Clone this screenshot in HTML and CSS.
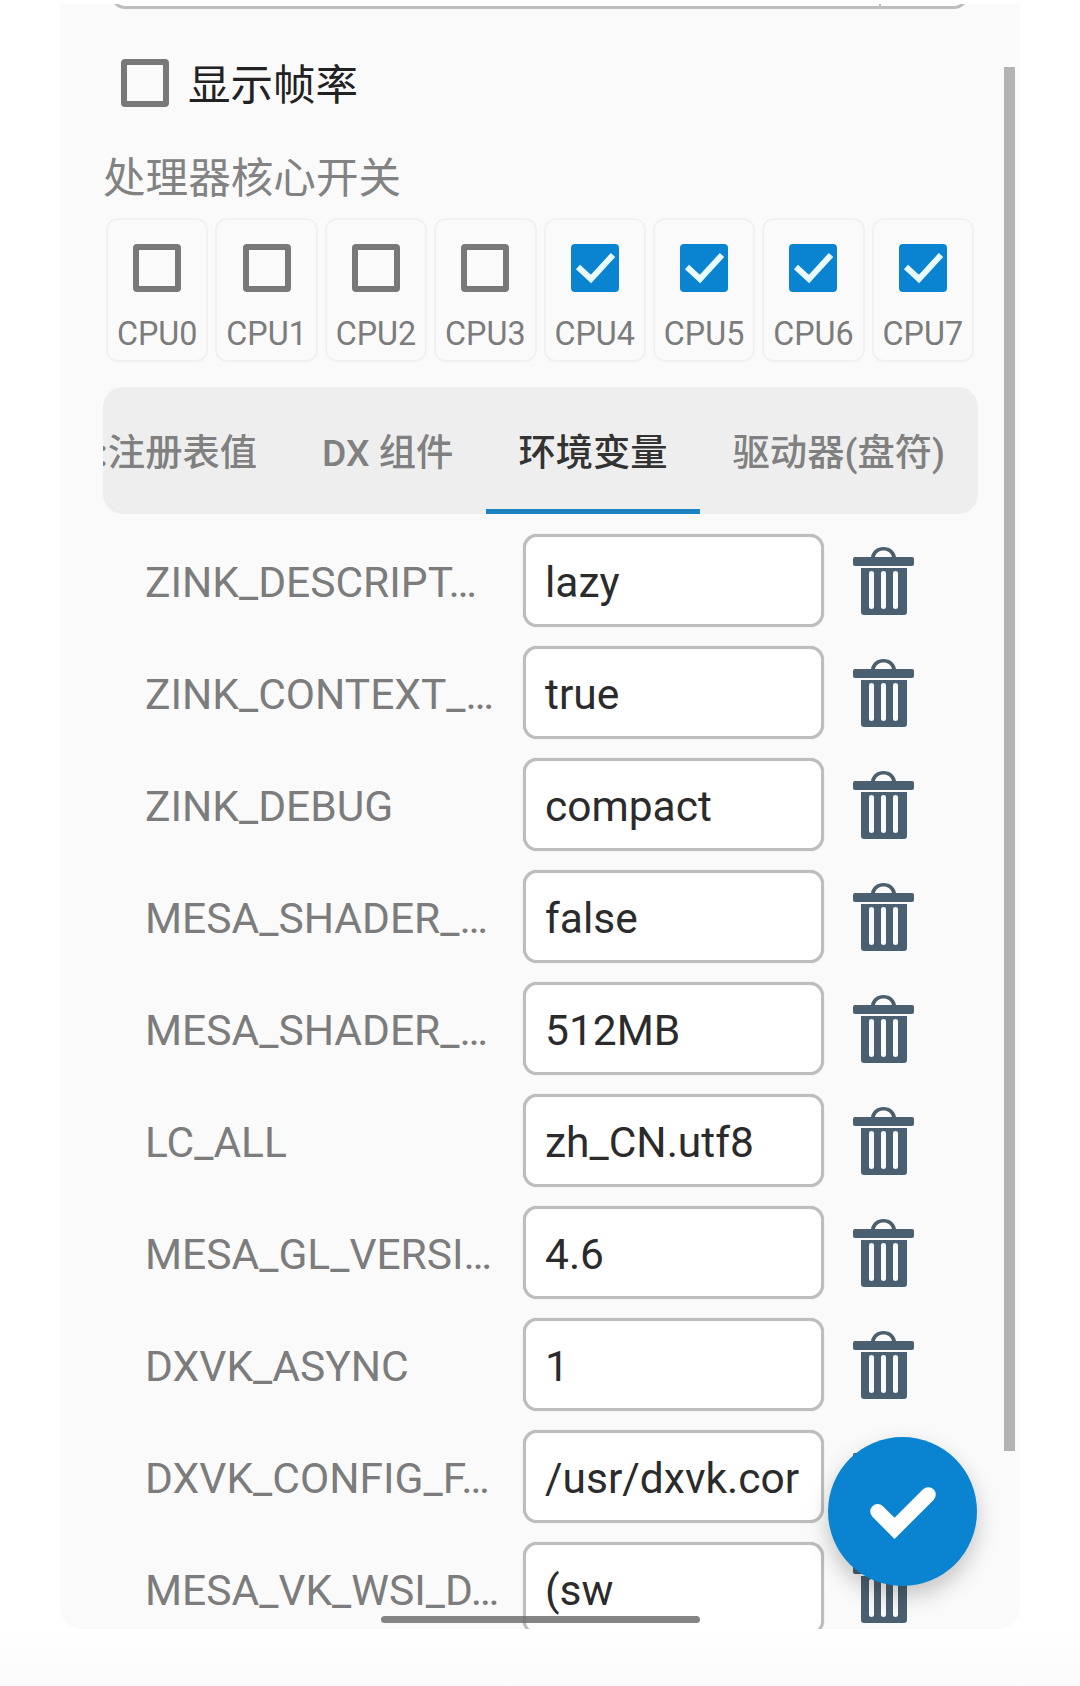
FILE: index.html
```html
<!DOCTYPE html>
<html lang="zh-CN">
<head>
<meta charset="utf-8">
<title>容器设置</title>
<link rel="stylesheet" href="styles.css">
</head>
<body>
<main class="panel">
  <div class="top-field"><span class="top-field-tick"></span></div>

  <label class="frame-row">
    <span class="box"></span>
    <span class="frame-text">显示帧率</span>
  </label>

  <h2 class="section-label">处理器核心开关</h2>

  <div class="cpu-grid">
    <div class="cpu-card"><span class="box"></span><span class="cpu-name">CPU0</span></div>
    <div class="cpu-card"><span class="box"></span><span class="cpu-name">CPU1</span></div>
    <div class="cpu-card"><span class="box"></span><span class="cpu-name">CPU2</span></div>
    <div class="cpu-card"><span class="box"></span><span class="cpu-name">CPU3</span></div>
    <div class="cpu-card"><span class="box box-on"><svg viewBox="0 0 48 48" class="tick"><path d="M7 23 20 35 42 11"/></svg></span><span class="cpu-name">CPU4</span></div>
    <div class="cpu-card"><span class="box box-on"><svg viewBox="0 0 48 48" class="tick"><path d="M7 23 20 35 42 11"/></svg></span><span class="cpu-name">CPU5</span></div>
    <div class="cpu-card"><span class="box box-on"><svg viewBox="0 0 48 48" class="tick"><path d="M7 23 20 35 42 11"/></svg></span><span class="cpu-name">CPU6</span></div>
    <div class="cpu-card"><span class="box box-on"><svg viewBox="0 0 48 48" class="tick"><path d="M7 23 20 35 42 11"/></svg></span><span class="cpu-name">CPU7</span></div>
  </div>

  <nav class="tabs">
    <div class="tab-strip">
      <span class="tab tab-first">:注册表值</span>
      <span class="tab">DX 组件</span>
      <span class="tab tab-active">环境变量</span>
      <span class="tab">驱动器(盘符)</span>
    </div>
  </nav>

  <div class="rows">
    <div class="row"><span class="key">ZINK_DESCRIPT…</span><div class="field"><span class="field-text">lazy</span></div><svg class="trash" viewBox="0 0 61 68"><use href="#trash-icon"/></svg></div>
    <div class="row"><span class="key">ZINK_CONTEXT_…</span><div class="field"><span class="field-text">true</span></div><svg class="trash" viewBox="0 0 61 68"><use href="#trash-icon"/></svg></div>
    <div class="row"><span class="key">ZINK_DEBUG</span><div class="field"><span class="field-text">compact</span></div><svg class="trash" viewBox="0 0 61 68"><use href="#trash-icon"/></svg></div>
    <div class="row"><span class="key">MESA_SHADER_…</span><div class="field"><span class="field-text">false</span></div><svg class="trash" viewBox="0 0 61 68"><use href="#trash-icon"/></svg></div>
    <div class="row"><span class="key">MESA_SHADER_…</span><div class="field"><span class="field-text">512MB</span></div><svg class="trash" viewBox="0 0 61 68"><use href="#trash-icon"/></svg></div>
    <div class="row"><span class="key">LC_ALL</span><div class="field"><span class="field-text">zh_CN.utf8</span></div><svg class="trash" viewBox="0 0 61 68"><use href="#trash-icon"/></svg></div>
    <div class="row"><span class="key">MESA_GL_VERSI…</span><div class="field"><span class="field-text">4.6</span></div><svg class="trash" viewBox="0 0 61 68"><use href="#trash-icon"/></svg></div>
    <div class="row"><span class="key">DXVK_ASYNC</span><div class="field"><span class="field-text">1</span></div><svg class="trash" viewBox="0 0 61 68"><use href="#trash-icon"/></svg></div>
    <div class="row"><span class="key">DXVK_CONFIG_F…</span><div class="field"><span class="field-text">/usr/dxvk.cor</span></div><svg class="trash" viewBox="0 0 61 68"><use href="#trash-icon"/></svg></div>
    <div class="row"><span class="key">MESA_VK_WSI_D…</span><div class="field"><span class="field-text">(sw</span></div><svg class="trash" viewBox="0 0 61 68"><use href="#trash-icon"/></svg></div>
  </div>

  <div class="scroll-v"></div>
  <div class="scroll-h"></div>
  <button class="fab" type="button" aria-label="确定">
    <svg viewBox="0 0 150 150" class="fab-tick"><path d="M50 75 67 92 101 58"/></svg>
  </button>
</main>
<div class="bottom-strip"></div>

<svg class="defs" width="0" height="0" aria-hidden="true">
  <symbol id="trash-icon" viewBox="0 0 61 68">
    <path fill="#4a5f6f" fill-rule="evenodd" d="M18 10C19 4 24 0 30.500 0S42 4 43 10H59Q61 10 61 12V17Q61 19 59 19H2Q0 19 0 17V12Q0 10 2 10ZM22 10H39C38 6 35 3.500 30.500 3.500S23 6 22 10ZM8 21H54V65Q54 68 51 68H11Q8 68 8 65ZM16 26V60Q16 62 18.500 62T21 60V26Q21 24 18.500 24T16 26ZM28 26V60Q28 62 30.500 62T33 60V26Q33 24 30.500 24T28 26ZM40 26V60Q40 62 42.500 62T45 60V26Q45 24 42.500 24T40 26Z"/>
  </symbol>
</svg>
</body>
</html>
```

FILE: styles.css
```css
* { box-sizing: border-box; }

html, body { margin: 0; padding: 0; }

body {
  width: 1080px;
  height: 1686px;
  overflow: hidden;
  background: #ffffff;
  font-family: Roboto, "Noto Sans CJK SC", sans-serif;
}

.panel {
  position: relative;
  width: 960px;
  height: 1625px;
  margin: 4px 0 0 60px;
  padding: 0 42px 0 43px;
  background: #fafafa;
  border-radius: 0 0 22px 22px;
  overflow: hidden;
}

.top-field {
  position: relative;
  width: 857px;
  height: 41px;
  margin: -36px 0 0 8px;
  background: #ffffff;
  border: 3px solid #bdbdbd;
  border-radius: 14px;
}

.top-field-tick {
  position: absolute;
  right: 84px;
  bottom: 0;
  width: 2px;
  height: 6px;
  background: #bdbdbd;
}

.frame-row {
  display: flex;
  align-items: center;
  gap: 19px;
  height: 48px;
  margin: 50px 0 0 18px;
}

.frame-text {
  padding-top: 5px;
  font-size: 42.500px;
  line-height: 48px;
  color: #222222;
}

.section-label {
  margin: 41px 0 0;
  font-size: 42.600px;
  font-weight: 400;
  line-height: 60px;
  color: #828282;
}

.box {
  display: block;
  flex: none;
  width: 48px;
  height: 48px;
  background: transparent;
  border: 6px solid #787878;
  border-radius: 4px;
}

.box-on {
  background: #0a84d0;
  border: 0;
}

.tick {
  display: block;
  width: 48px;
  height: 48px;
  fill: none;
  stroke: #e9fbff;
  stroke-width: 6;
}

.cpu-grid {
  display: grid;
  grid-template-columns: repeat(8, 1fr);
  gap: 7px;
  margin: 10px 4px 0 3px;
}

.cpu-card {
  display: flex;
  flex-direction: column;
  align-items: center;
  height: 144px;
  padding-top: 24px;
  border: 2px solid #f1f1f1;
  border-radius: 12px;
}

.cpu-name {
  margin-top: 22px;
  font-size: 32.300px;
  line-height: 40px;
  color: #7c7c7c;
  white-space: nowrap;
}

.tabs {
  height: 127px;
  margin-top: 25px;
  background: #eeeeee;
  border-radius: 20px;
  overflow: hidden;
}

.tab-strip {
  display: flex;
  height: 127px;
  margin-left: -29px;
  width: max-content;
}

.tab {
  display: flex;
  align-items: center;
  height: 127px;
  padding: 0 32.500px 2px;
  font-size: 37.300px;
  font-weight: 500;
  color: #808080;
  white-space: nowrap;
}

.tab-first { padding-left: 24px; }

.tab-active {
  color: #333333;
  font-weight: 500;
  border-bottom: 5px solid #1b84c0;
  padding-top: 3px;
  padding-bottom: 0;
}

.rows {
  display: flex;
  flex-direction: column;
  gap: 19px;
  margin-top: 20px;
}

.row {
  display: flex;
  align-items: center;
  flex: none;
  height: 93px;
  padding-left: 42px;
}

.key {
  flex: none;
  width: 355px;
  margin-right: 23px;
  padding-top: 3px;
  font-size: 42.500px;
  color: #7c7c7c;
  white-space: nowrap;
}

.field {
  flex: none;
  display: flex;
  align-items: center;
  width: 301px;
  height: 93px;
  padding: 4px 18px 0 19px;
  background: #ffffff;
  border: 3px solid #bdbdbd;
  border-radius: 14px;
  box-shadow: 0 0 1px #b5b5b5;
}

.field-text {
  display: block;
  font-size: 42.500px;
  line-height: 54px;
  color: #2b2b2b;
  white-space: nowrap;
}

.trash {
  flex: none;
  width: 61px;
  height: 68px;
  margin-left: 29px;
}

.scroll-v {
  position: absolute;
  top: 63px;
  left: 944px;
  width: 11px;
  height: 1384px;
  background: #b3b3b3;
}

.scroll-h {
  position: absolute;
  left: 321px;
  top: 1612px;
  width: 319px;
  height: 7px;
  background: rgba(110, 110, 110, 0.85);
  border-radius: 4px;
}

.fab {
  position: absolute;
  left: 768px;
  top: 1433px;
  width: 149px;
  height: 149px;
  padding: 0;
  background: #0a84d0;
  border: 0;
  border-radius: 50%;
  box-shadow: 0 10px 22px rgba(0, 0, 0, 0.22);
}

.fab-tick {
  display: block;
  width: 149px;
  height: 149px;
  fill: none;
  stroke: #ffffff;
  stroke-width: 15;
  stroke-linecap: round;
}

.bottom-strip {
  height: 57px;
  background: linear-gradient(#ffffff, #fbfbfb);
}

.defs { position: absolute; }
```
